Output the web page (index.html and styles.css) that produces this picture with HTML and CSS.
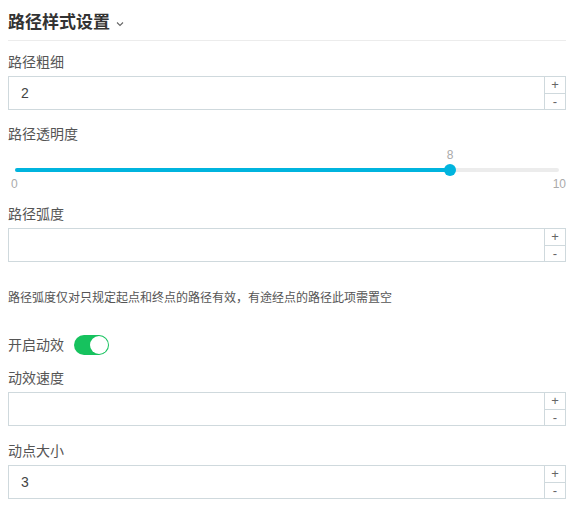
FILE: index.html
```html
<!DOCTYPE html>
<html>
<head>
<meta charset="utf-8">
<link rel="stylesheet" href="styles.css">
</head>
<body>
<div class="panel">
  <div class="header">
    <span class="title">路径样式设置</span>
    <svg class="chev" width="8" height="6" viewBox="0 0 8 6"><path d="M1 1.5 L4 4.5 L7 1.5" fill="none" stroke="#666" stroke-width="1.1"/></svg>
  </div>

  <div class="label first">路径粗细</div>
  <div class="num">
    <div class="num-val">2</div>
    <div class="spin"><div class="spin-btn">+</div><div class="spin-btn">-</div></div>
  </div>

  <div class="label">路径透明度</div>
  <div class="slider">
    <div class="slider-inner">
      <div class="track"><div class="fill" style="width:80%"></div></div>
      <div class="knob" style="left:80%"></div>
      <div class="knob-val" style="left:80%">8</div>
    </div>
    <div class="scale"><span>0</span><span>10</span></div>
  </div>

  <div class="label">路径弧度</div>
  <div class="num">
    <div class="num-val"></div>
    <div class="spin"><div class="spin-btn">+</div><div class="spin-btn">-</div></div>
  </div>

  <div class="help">路径弧度仅对只规定起点和终点的路径有效，有途经点的路径此项需置空</div>

  <div class="toggle-row">
    <span class="toggle-label">开启动效</span>
    <span class="toggle"><span class="toggle-knob"></span></span>
  </div>

  <div class="label after-toggle">动效速度</div>
  <div class="num">
    <div class="num-val"></div>
    <div class="spin"><div class="spin-btn">+</div><div class="spin-btn">-</div></div>
  </div>

  <div class="label last">动点大小</div>
  <div class="num">
    <div class="num-val">3</div>
    <div class="spin"><div class="spin-btn">+</div><div class="spin-btn">-</div></div>
  </div>
</div>
</body>
</html>
```

FILE: styles.css
```css
html, body {
  margin: 0;
  padding: 0;
  background: #fff;
}
body {
  font-family: "Liberation Sans", "Noto Sans CJK SC", sans-serif;
  color: #555;
}
.panel {
  width: 558px;
  margin-left: 8px;
  display: flex;
  flex-direction: column;
}
.header {
  display: flex;
  align-items: center;
  gap: 6px;
  height: 41px;
  padding-top: 4px;
  box-sizing: border-box;
  border-bottom: 1px solid #ececec;
}
.title {
  font-size: 17px;
  font-weight: bold;
  color: #333;
  line-height: 23px;
}
.chev {
  margin-top: 3px;
}
.label {
  font-size: 14px;
  line-height: 20px;
  color: #555;
  margin-top: 14px;
  margin-bottom: 4px;
}
.label.first {
  margin-top: 11px;
}
.label.after-toggle {
  margin-top: 13px;
}
.label.last {
  margin-top: 15px;
}
.num {
  height: 34px;
  box-sizing: border-box;
  border: 1px solid #cfd9dd;
  display: flex;
}
.num-val {
  flex: 1;
  font-size: 14px;
  color: #444;
  line-height: 32px;
  padding-left: 12px;
}
.spin {
  width: 20px;
  border-left: 1px solid #cfd9dd;
  display: flex;
  flex-direction: column;
}
.spin-btn {
  flex: 1;
  display: flex;
  align-items: center;
  justify-content: center;
  font-size: 13px;
  color: #666;
  line-height: 1;
}
.spin-btn + .spin-btn {
  border-top: 1px solid #cfd9dd;
}
.slider {
  padding: 16px 7px 0 7px;
  height: 42px;
  box-sizing: border-box;
}
.slider-inner {
  position: relative;
  height: 12px;
  display: flex;
  align-items: center;
}
.track {
  flex: 1;
  height: 4px;
  border-radius: 2px;
  background: #ececec;
  display: flex;
}
.fill {
  height: 4px;
  border-radius: 2px;
  background: #00b4de;
}
.knob {
  position: absolute;
  top: 0;
  width: 12px;
  height: 12px;
  margin-left: -6px;
  border-radius: 50%;
  background: #00b4de;
}
.knob-val {
  position: absolute;
  top: -17px;
  width: 20px;
  margin-left: -10px;
  text-align: center;
  font-size: 12px;
  color: #aaa;
  line-height: 16px;
}
.scale {
  display: flex;
  justify-content: space-between;
  margin: 0 -7px 0 -4px;
  font-size: 12px;
  color: #aaa;
  line-height: 16px;
}
.help {
  font-size: 12px;
  color: #555;
  line-height: 18px;
  margin-top: 27px;
}
.toggle-row {
  display: flex;
  align-items: center;
  gap: 10px;
  margin-top: 28px;
  height: 20px;
}
.toggle-label {
  font-size: 14px;
  color: #555;
  line-height: 20px;
}
.toggle {
  width: 35px;
  height: 20px;
  border-radius: 10px;
  background: #16c25e;
  display: flex;
  justify-content: flex-end;
  align-items: center;
  padding: 1px;
  box-sizing: border-box;
}
.toggle-knob {
  width: 18px;
  height: 18px;
  border-radius: 50%;
  background: #fff;
}
```
